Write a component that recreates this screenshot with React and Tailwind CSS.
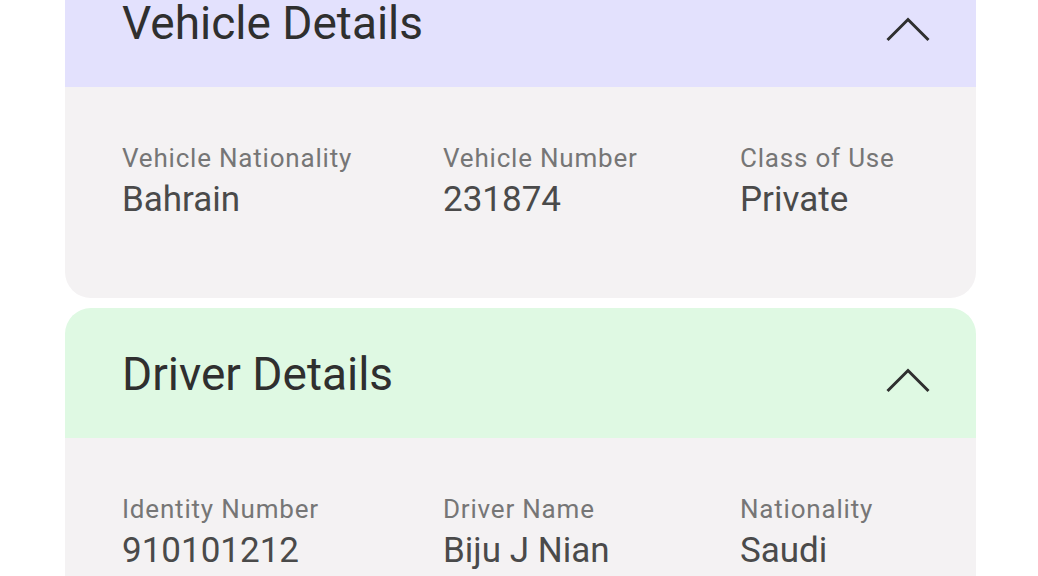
import React from "react";

function Chevron() {
  return (
    <svg width="46" height="26" viewBox="0 0 46 26" className="translate-y-[8px]" fill="none">
      <polyline points="2.5,23 23,2.5 43.5,23" stroke="#2f2f2f" strokeWidth="3" strokeLinejoin="miter" strokeLinecap="butt" />
    </svg>
  );
}

function Field({ label, value, w }) {
  return (
    <div className={w}>
      <div className="text-[26px] leading-[32px] tracking-[0.8px] text-[#767676]">{label}</div>
      <div className="mt-[5px] text-[35px] leading-[42px] text-[#4a4a4a]">{value}</div>
    </div>
  );
}

function Card({ title, headerBg, fields, bodyH }) {
  return (
    <div className="rounded-[26px] overflow-hidden">
      <div className={`h-[130px] ${headerBg} flex items-center justify-between pl-[57px] pr-[45px]`}>
        <div className="text-[46px] leading-[54px] text-[#2f2f2f] whitespace-nowrap translate-y-[1px]">{title}</div>
        <Chevron />
      </div>
      <div className={`bg-[#f4f2f3] ${bodyH} pl-[57px] pt-[55px] flex`}>
        <Field label={fields[0][0]} value={fields[0][1]} w="w-[321px]" />
        <Field label={fields[1][0]} value={fields[1][1]} w="w-[297px]" />
        <Field label={fields[2][0]} value={fields[2][1]} w="w-[200px]" />
      </div>
    </div>
  );
}

export default function App() {
  return (
    <div className="w-[1038px] h-[576px] bg-white overflow-hidden" style={{ fontFamily: "Roboto, 'Noto Sans', sans-serif" }}>
      <div className="ml-[65px] w-[911px] -mt-[43px] flex flex-col gap-[10px]">
        <Card
          title="Vehicle Details"
          headerBg="bg-[#e3e1fd]"
          bodyH="h-[211px]"
          fields={[["Vehicle Nationality", "Bahrain"], ["Vehicle Number", "231874"], ["Class of Use", "Private"]]}
        />
        <Card
          title="Driver Details"
          headerBg="bg-[#dff9e3]"
          bodyH="h-[211px]"
          fields={[["Identity Number", "910101212"], ["Driver Name", "Biju J Nian"], ["Nationality", "Saudi"]]}
        />
      </div>
    </div>
  );
}
